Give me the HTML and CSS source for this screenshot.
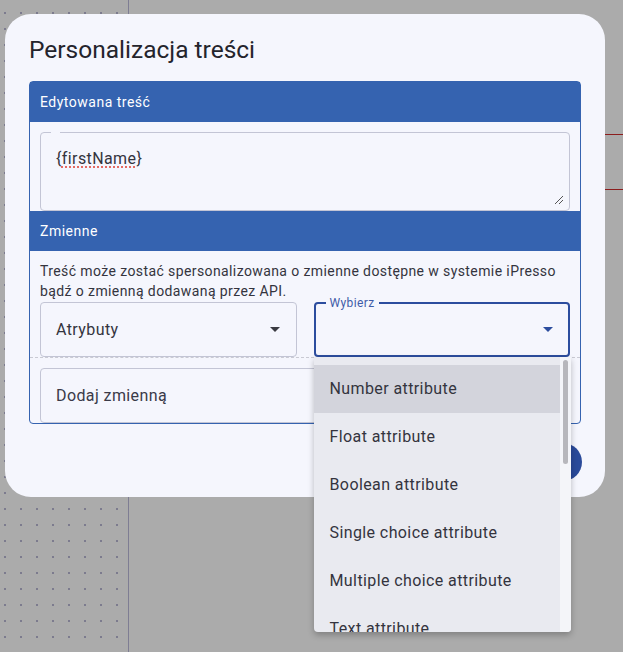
FILE: index.html
```html
<!DOCTYPE html>
<html lang="pl">
<head>
    <meta charset="UTF-8">
    <meta name="viewport" content="width=device-width, initial-scale=1.0">
    <title>Personalizacja treści</title>
    <link rel="stylesheet" href="styles.css">
</head>
<body>
    <div class="stage">
        <aside class="dots"></aside>
        <main class="workspace">
            <div class="guide"></div>
        </main>
    </div>

    <!-- okno personalizacji -->
    <div class="modal">
        <h1 class="modal-title">Personalizacja treści</h1>

        <div class="panel">
            <div class="panel-head">Edytowana treść</div>
            <div class="panel-body editor">
                <div class="textarea">
                    <span class="notch"></span>
                    <span class="value">{<span class="typo">firstName</span>}</span>
                    <svg class="resize" width="10" height="10" viewBox="0 0 10 10">
                        <path d="M1 9 L9 1 M5 9 L9 5" stroke="#555" stroke-width="1" fill="none"/>
                    </svg>
                </div>
            </div>

            <div class="panel-head">Zmienne</div>
            <div class="panel-body vars">
                <p class="hint">Treść może zostać spersonalizowana o zmienne dostępne w systemie iPresso bądź o zmienną dodawaną przez API.</p>
                <div class="selects">
                    <div class="select">
                        <span>Atrybuty</span>
                        <span class="caret"></span>
                    </div>
                    <div class="select open">
                        <span class="float-label">Wybierz</span>
                        <span class="caret"></span>
                        <div class="menu">
                            <div class="menu-list">
                                <div class="menu-item hover">Number attribute</div>
                                <div class="menu-item">Float attribute</div>
                                <div class="menu-item">Boolean attribute</div>
                                <div class="menu-item">Single choice attribute</div>
                                <div class="menu-item">Multiple choice attribute</div>
                                <div class="menu-item">Text attribute</div>
                            </div>
                            <div class="scrollbar"><div class="thumb"></div></div>
                        </div>
                    </div>
                </div>
            </div>

            <div class="panel-body custom">
                <div class="field">Dodaj zmienną</div>
            </div>
        </div>

        <div class="modal-foot">
            <button class="btn-save">Zapisz</button>
        </div>
    </div>
</body>
</html>
```

FILE: styles.css
```css
body {
    margin: 0;
    width: 623px;
    height: 652px;
    overflow: hidden;
    background: #ababab;
    font-family: Roboto, 'Noto Sans', sans-serif;
    letter-spacing: 0.4px;
    color: #34343e;
}

.stage {
    display: flex;
    height: 652px;
}

.dots {
    width: 128px;
    border-right: 1px solid #7e7d93;
    background-color: #7c7b8e;
    background-image:
        linear-gradient(90deg, #ababab 14px, transparent 14px),
        linear-gradient(#ababab 14px, transparent 14px);
    background-size: 16px 16px;
    background-position: -10px -2px;
}

.workspace {
    flex: 1;
    padding-top: 134px;
}

.guide {
    height: 54px;
    border-top: 1px solid #8c1d1d;
    border-bottom: 1px solid #8c1d1d;
}

.modal {
    position: absolute;
    left: 5px;
    top: 14px;
    width: 600px;
    height: 483px;
    box-sizing: border-box;
    padding: 20px 24px 0;
    background: #f5f6fd;
    border-radius: 26px;
}

.modal-title {
    margin: 0 0 15px;
    font-size: 24.5px;
    line-height: 32px;
    font-weight: 400;
    letter-spacing: 0;
    color: #24242c;
}

.panel {
    border: 1px solid #3563b0;
    border-radius: 4px;
}

.panel-head {
    height: 40px;
    line-height: 40px;
    padding: 0 10px;
    background: #3563b0;
    color: #ffffff;
    font-size: 14px;
    letter-spacing: 0.5px;
}

.panel-body {
    padding: 10px 10px 0;
}

.textarea {
    position: relative;
    height: 79px;
    box-sizing: border-box;
    border: 1px solid #c3c5d5;
    border-radius: 4px;
    padding: 14px 15px;
    font-size: 16px;
    line-height: 24px;
}

.notch {
    position: absolute;
    top: -1px;
    left: 10px;
    width: 9px;
    height: 1px;
    background: #f5f6fd;
}

.typo {
    text-decoration: underline dotted #e0483c;
    text-underline-offset: 3px;
}

.resize {
    position: absolute;
    right: 5px;
    bottom: 5px;
}

.vars {
    border-bottom: 1px dashed #c9cad3;
}

.hint {
    margin: 0 0 1px;
    font-size: 14px;
    line-height: 20px;
}

.selects {
    display: grid;
    grid-template-columns: 1fr 1fr;
    gap: 17px;
}

.select {
    position: relative;
    height: 55px;
    box-sizing: border-box;
    border: 1px solid #c3c5d5;
    border-radius: 4px;
    padding: 0 15px;
    display: flex;
    align-items: center;
    justify-content: space-between;
    font-size: 16px;
}

.select.open {
    border: 2px solid #2c4d9e;
    padding: 0 14px;
    justify-content: flex-end;
}

.caret {
    width: 0;
    height: 0;
    border-left: 5px solid transparent;
    border-right: 5px solid transparent;
    border-top: 5px solid #3a3a42;
    margin-right: 1px;
}

.select.open .caret {
    border-top-color: #2c4d9e;
}

.float-label {
    position: absolute;
    top: -9px;
    left: 10px;
    padding: 0 4px;
    background: #f5f6fd;
    color: #3f5ca8;
    font-size: 12px;
    line-height: 16px;
}

.menu {
    position: absolute;
    top: 53px;
    left: -2px;
    width: 257px;
    height: 275px;
    display: flex;
    background: #e9eaf0;
    border-radius: 0 0 4px 4px;
    box-shadow: 0 3px 6px rgba(0, 0, 0, 0.25);
    overflow: hidden;
    z-index: 2;
}

.menu-list {
    flex: 1;
    padding-top: 8px;
}

.menu-item {
    height: 48px;
    line-height: 48px;
    padding-left: 16px;
    font-size: 16px;
    color: #34343e;
}

.menu-item.hover {
    background: #d3d4dc;
}

.scrollbar {
    width: 11px;
    background: #f4f5f9;
    padding: 3px 0 0 3px;
    box-sizing: border-box;
}

.thumb {
    width: 5px;
    height: 104px;
    border-radius: 3px;
    background: #b7b7bc;
}

.custom {
    padding-bottom: 0;
}

.field {
    height: 55px;
    box-sizing: border-box;
    border: 1px solid #c3c5d5;
    border-radius: 4px;
    padding: 0 15px;
    display: flex;
    align-items: center;
    font-size: 16px;
    color: #3a3a48;
}

.modal-foot {
    display: flex;
    justify-content: flex-end;
    margin-top: 19px;
    margin-right: -1px;
}

.btn-save {
    height: 38px;
    padding: 0 28px;
    border: none;
    border-radius: 19px;
    background: #2a4a9a;
    color: #ffffff;
    font-family: inherit;
    font-size: 14px;
}
```
